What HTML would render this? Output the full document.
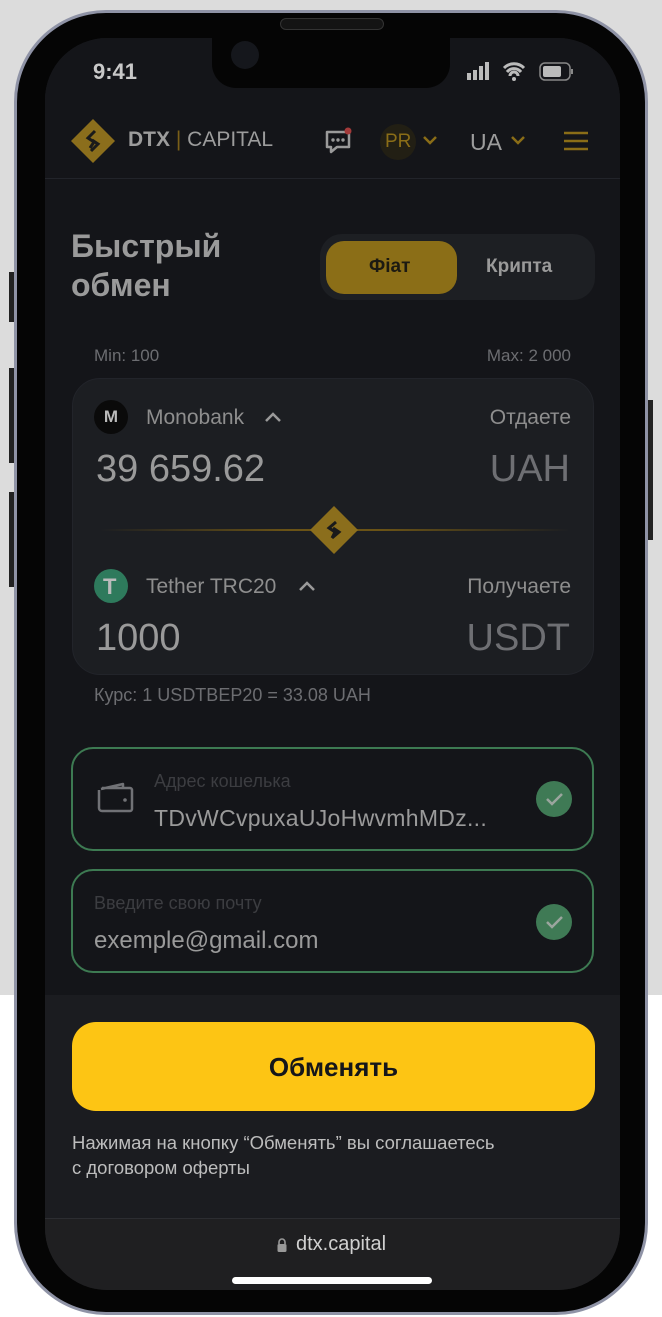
<!DOCTYPE html>
<html><head><meta charset="utf-8"><style>
*{margin:0;padding:0;box-sizing:border-box}
body{width:662px;height:1317px;background:#fff;position:relative;overflow:hidden;font-family:"Liberation Sans","DejaVu Sans",sans-serif}
.abs{position:absolute}
.t{position:absolute;white-space:nowrap}
</style></head><body>
<div class="abs" style="left:0;top:0;width:662px;height:995px;background:#dcdcdc"></div>
<div class="abs" style="left:14px;top:10px;width:634px;height:1305px;border-radius:92px;background:#8f93a6;"></div>
<div class="abs" style="left:17px;top:13px;width:628px;height:1299px;border-radius:89px;background:#050505;"></div>
<div class="abs" style="left:9px;top:272px;width:5px;height:50px;background:#222;"></div>
<div class="abs" style="left:9px;top:368px;width:5px;height:95px;background:#222;"></div>
<div class="abs" style="left:9px;top:492px;width:5px;height:95px;background:#222;"></div>
<div class="abs" style="left:648px;top:400px;width:5px;height:140px;background:#222;"></div>
<div class="abs" style="left:45px;top:38px;width:575px;height:1252px;border-radius:62px;background:#1b1c20;overflow:hidden">
  <div class="abs" style="left:0;top:0;width:575px;height:957px;background:#141519"></div>
  <div class="abs" style="left:0;top:1180px;width:575px;height:80px;background:#1f1f21;border-top:1px solid #2c2d31"></div>
</div>
<div class="abs" style="left:280px;top:18px;width:104px;height:12px;border-radius:6px;background:#141414;border:1px solid #333"></div>
<div class="abs" style="left:212px;top:38px;width:238px;height:50px;background:#050505;border-radius:0 0 24px 24px"></div>
<div class="abs" style="left:231px;top:41px;width:28px;height:28px;border-radius:50%;background:#15171c"></div>
<div class="t" style="left:93px;top:59px;font-size:22px;font-weight:bold;color:#c8c8c8">9:41</div>
<svg class="abs" style="left:464px;top:60px" width="130" height="24">
<rect x="3" y="13" width="4" height="7" fill="#bbb"/><rect x="9" y="10" width="4" height="10" fill="#bbb"/><rect x="15" y="6" width="4" height="14" fill="#bbb"/><rect x="21" y="2" width="4" height="18" fill="#bbb"/>
<path d="M40 8a14 14 0 0 1 20 0M43 12a9 9 0 0 1 14 0M46 16a4 4 0 0 1 8 0" stroke="#bbb" stroke-width="3" fill="none"/><circle cx="50" cy="19" r="2" fill="#bbb"/>
<rect x="76" y="3" width="30" height="17" rx="5" fill="none" stroke="#888" stroke-width="1.5"/><rect x="79" y="6" width="18" height="11" rx="2" fill="#bbb"/><rect x="107" y="9" width="2" height="5" fill="#888"/>
</svg>
<svg class="abs" style="left:70px;top:118px" width="46" height="46"><path d="M23 1L45 23L23 45L1 23Z" fill="#8b6e1c"/><path d="M25 13l-7 7 6 4-4 6M21 33l7-7-6-4" stroke="#1a1a1a" stroke-width="3" fill="none"/></svg>
<div class="t" style="left:128px;top:128px;font-size:21px;color:#9c9c9c"><b>DTX</b> <span style="color:#7a5f18">|</span> CAPITAL</div>
<svg class="abs" style="left:323px;top:126px" width="32" height="30"><path d="M4 6h22v15h-12l-6 5v-5h-4z" fill="none" stroke="#9a9a9a" stroke-width="2.5" stroke-linejoin="round"/><circle cx="10" cy="14" r="1.7" fill="#9a9a9a"/><circle cx="15" cy="14" r="1.7" fill="#9a9a9a"/><circle cx="20" cy="14" r="1.7" fill="#9a9a9a"/><circle cx="25" cy="5" r="3.5" fill="#a33a3a"/></svg>
<div class="abs" style="left:380px;top:124px;width:36px;height:36px;border-radius:50%;background:#221f14"></div>
<div class="t" style="left:385px;top:131px;font-size:19px;color:#8a6d17">PR</div>
<svg class="abs" style="left:422px;top:134px" width="16" height="12"><path d="M2 3l6 6 6-6" stroke="#8a6d17" stroke-width="2.5" fill="none"/></svg>
<div class="t" style="left:470px;top:129px;font-size:23px;color:#9c9c9c">UA</div>
<svg class="abs" style="left:510px;top:134px" width="16" height="12"><path d="M2 3l6 6 6-6" stroke="#8a6d17" stroke-width="2.5" fill="none"/></svg>
<svg class="abs" style="left:562px;top:130px" width="28" height="24"><path d="M2 3h24M2 11h24M2 19h24" stroke="#8a6d17" stroke-width="2.5"/></svg>
<div class="abs" style="left:45px;top:178px;width:575px;height:1px;background:#22242a"></div>
<div class="t" style="left:71px;top:227px;font-size:32px;line-height:39px;font-weight:bold;color:#9a9a9a">Быстрый<br>обмен</div>
<div class="abs" style="left:320px;top:234px;width:275px;height:66px;border-radius:22px;background:#1d1f23"></div>
<div class="abs" style="left:326px;top:241px;width:131px;height:53px;border-radius:18px;background:#8b6e17"></div>
<div class="t" style="left:369px;top:256px;font-size:19px;font-weight:bold;color:#1c1a12">Фiат</div>
<div class="t" style="left:486px;top:256px;font-size:19px;font-weight:bold;color:#9a9a9a">Крипта</div>
<div class="t" style="left:94px;top:346px;font-size:17px;color:#6c6d71">Min: 100</div>
<div class="t" style="right:91px;top:346px;font-size:17px;color:#6c6d71">Max: 2 000</div>
<div class="abs" style="left:72px;top:378px;width:522px;height:297px;border-radius:28px;background:#1c1e22;border:1px solid #22242a"></div>
<div class="abs" style="left:94px;top:400px;width:34px;height:34px;border-radius:50%;background:#0a0a0a;color:#bbb;font-weight:bold;font-size:17px;text-align:center;line-height:34px">M</div>
<div class="t" style="left:146px;top:406px;font-size:21px;color:#8e8e8e">Monobank</div>
<svg class="abs" style="left:263px;top:410px" width="20" height="14"><path d="M3 11l7-7 7 7" stroke="#9a9a9a" stroke-width="2.5" fill="none"/></svg>
<div class="t" style="right:91px;top:406px;font-size:21px;color:#8e8e8e">Отдаете</div>
<div class="t" style="left:96px;top:448px;font-size:38px;color:#9a9a9a">39 659.62</div>
<div class="t" style="right:92px;top:448px;font-size:38px;color:#6e6f73">UAH</div>
<div class="abs" style="left:100px;top:529px;width:470px;height:2px;background:linear-gradient(90deg,transparent,#6a5316 40%,#6a5316 60%,transparent)"></div>
<svg class="abs" style="left:308px;top:504px" width="52" height="52"><path d="M26 2L50 26L26 50L2 26Z" fill="#8b6e1c"/><path d="M28 18l-7 6 6 4-3 6M24 34l7-6-6-4" stroke="#1a1a1a" stroke-width="3" fill="none"/></svg>
<div class="abs" style="left:94px;top:569px;width:34px;height:34px;border-radius:50%;background:#2e7a5c"></div>
<div class="t" style="left:103px;top:574px;font-size:22px;font-weight:bold;color:#bbb">T</div>
<div class="t" style="left:146px;top:575px;font-size:21px;color:#8e8e8e">Tether TRC20</div>
<svg class="abs" style="left:297px;top:579px" width="20" height="14"><path d="M3 11l7-7 7 7" stroke="#9a9a9a" stroke-width="2.5" fill="none"/></svg>
<div class="t" style="right:91px;top:575px;font-size:21px;color:#8e8e8e">Получаете</div>
<div class="t" style="left:96px;top:617px;font-size:38px;color:#9a9a9a">1000</div>
<div class="t" style="right:92px;top:617px;font-size:38px;color:#6e6f73">USDT</div>
<div class="t" style="left:94px;top:685px;font-size:18px;color:#6c6d71">Курс: 1 USDTBEP20 = 33.08 UAH</div>
<div class="abs" style="left:71px;top:747px;width:523px;height:104px;border-radius:22px;border:2px solid #3d7a52"></div>
<svg class="abs" style="left:96px;top:780px" width="40" height="36"><path d="M3 10v18a3 3 0 0 0 3 3h28a2 2 0 0 0 2-2V10a2 2 0 0 0-2-2H6M5 9l22-5v4" stroke="#717276" stroke-width="2.5" fill="none" stroke-linejoin="round"/><circle cx="29" cy="20" r="1.8" fill="#717276"/></svg>
<div class="t" style="left:154px;top:771px;font-size:18px;color:#3c3d41">Адрес кошелька</div>
<div class="t" style="left:154px;top:805px;font-size:23px;letter-spacing:0.3px;color:#9a9a9a">TDvWCvpuxaUJoHwvmhMDz...</div>
<div class="abs" style="left:536px;top:781px;width:36px;height:36px;border-radius:50%;background:#3f7a55"></div>
<svg class="abs" style="left:536px;top:781px" width="36" height="36"><path d="M11 18l5 5 10-10" stroke="#9aa59e" stroke-width="2.5" fill="none"/></svg>
<div class="abs" style="left:71px;top:869px;width:523px;height:104px;border-radius:22px;border:2px solid #3d7a52"></div>
<div class="t" style="left:94px;top:893px;font-size:18px;color:#3c3d41">Введите свою почту</div>
<div class="t" style="left:94px;top:927px;font-size:24px;color:#9a9a9a">exemple@gmail.com</div>
<div class="abs" style="left:536px;top:904px;width:36px;height:36px;border-radius:50%;background:#3f7a55"></div>
<svg class="abs" style="left:536px;top:904px" width="36" height="36"><path d="M11 18l5 5 10-10" stroke="#9aa59e" stroke-width="2.5" fill="none"/></svg>
<div class="abs" style="left:72px;top:1022px;width:523px;height:89px;border-radius:24px;background:#fdc514"></div>
<div class="t" style="left:72px;width:523px;text-align:center;top:1052px;font-size:26px;font-weight:bold;color:#15161a">Обменять</div>
<div class="t" style="left:72px;top:1130px;font-size:18.5px;line-height:25px;color:#bdbdbd">Нажимая на кнопку “Обменять” вы соглашаетесь<br>с договором оферты</div>
<svg class="abs" style="left:276px;top:1237px" width="12" height="16"><path d="M3 7V5a3 3 0 0 1 6 0v2" stroke="#999" stroke-width="1.6" fill="none"/><rect x="1.5" y="7" width="9" height="8" rx="1.5" fill="#999"/></svg>
<div class="t" style="left:296px;top:1233px;font-size:20px;color:#d0d0d0">dtx.capital</div>
<div class="abs" style="left:232px;top:1277px;width:200px;height:7px;border-radius:4px;background:#fff"></div>
</body></html>
